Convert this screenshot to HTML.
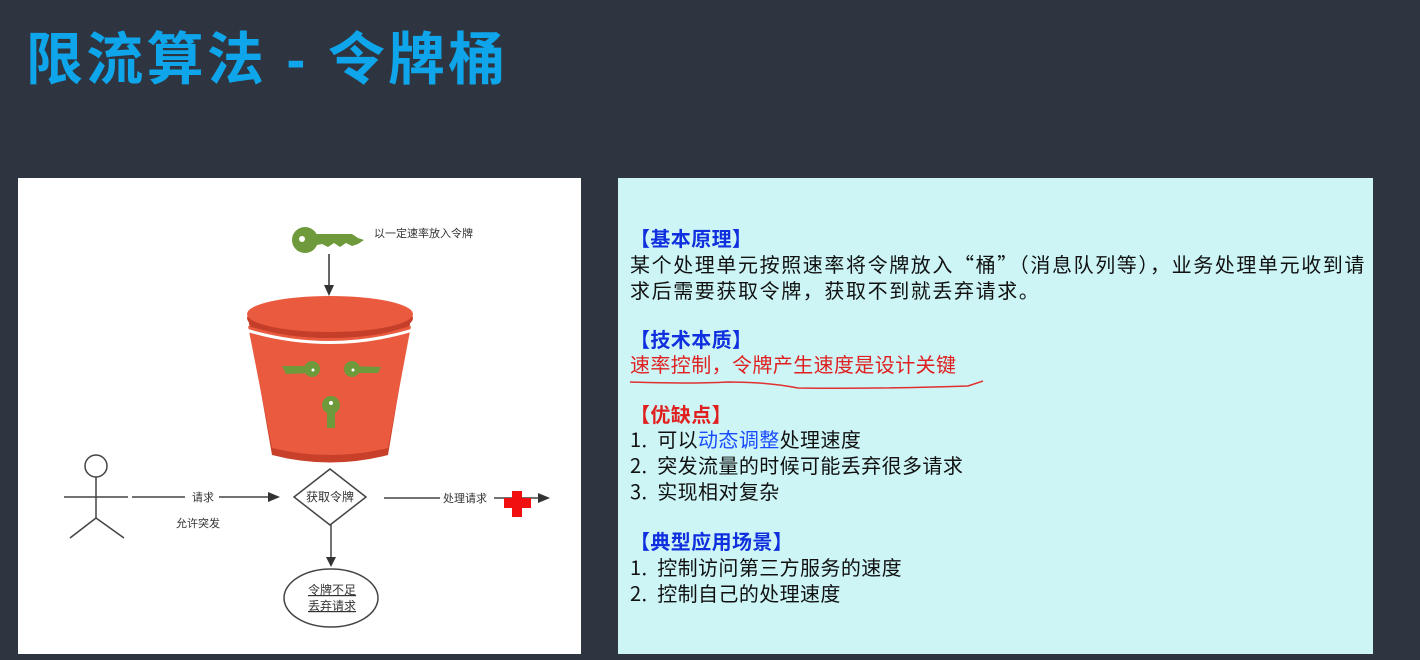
<!DOCTYPE html>
<html><head><meta charset="utf-8"><style>
body{margin:0;width:1420px;height:660px;background:#2e3541;overflow:hidden;position:relative;font-family:"Liberation Sans","Noto Sans CJK SC",sans-serif}
.title{position:absolute;left:26px;top:14px;font-size:57px;font-weight:bold;color:#0ea5ea;letter-spacing:3.3px;white-space:nowrap}
.left{position:absolute;left:18px;top:178px;width:563px;height:476px;background:#fff}
.right{position:absolute;left:618px;top:178px;width:755px;height:476px;background:#cdf5f6}
.t{position:absolute;left:12px;font-size:20px;color:#111;white-space:nowrap;line-height:26px;font-family:"Noto Sans CJK SC",sans-serif;letter-spacing:1.6px}
.h{color:#1030e0;font-weight:bold;letter-spacing:0.4px}
.red{color:#e02020}
.blue{color:#1a4cff}
</style></head><body>
<div class="title">限流算法 - 令牌桶</div>
<div class="left">
<svg width="563" height="476" viewBox="18 178 563 476" font-family="Liberation Sans,Noto Sans CJK SC,sans-serif" font-size="11" fill="#333">
<g fill="#6f9a3c">
<circle cx="305" cy="240" r="13"/>
<path d="M312 234 L352 234 L358 238 L364 240 L358 244 L352 246 L346 243 L340 247 L334 243 L328 247 L322 244 L312 246 Z"/>
</g>
<circle cx="302" cy="239" r="3" fill="#fff"/>
<text x="374" y="237">以一定速率放入令牌</text>
<line x1="329" y1="254" x2="329" y2="287" stroke="#333" stroke-width="1.5"/>
<path d="M324 285 L334 285 L329 296 Z" fill="#333"/>
<path d="M248 318 L411 318 L388 455 Q330 470 272 455 Z" fill="#c8402a"/>
<path d="M248 326 Q330 350 411 326 L388 448 Q330 462 272 448 Z" fill="#ea5a3e"/>
<ellipse cx="330" cy="318" rx="83" ry="20" fill="#c43e2a"/>
<ellipse cx="330" cy="314" rx="83" ry="18" fill="#ea5a3e"/>
<path d="M246 330 Q330 355 413 330" stroke="#fff" stroke-width="3" fill="none"/>
<g fill="#6f9a3c">
<circle cx="312" cy="369" r="8"/><path d="M282 366 L312 366 L312 373 L286 374 Z"/>
<circle cx="352" cy="369" r="8"/><path d="M352 366 L381 367 L378 373 L352 373 Z"/>
<circle cx="331" cy="405" r="9"/><path d="M327 405 L335 405 L335 428 L327 428 Z"/>
</g>
<circle cx="313" cy="370" r="1.5" fill="#fff"/><circle cx="353" cy="370" r="1.5" fill="#fff"/><circle cx="331" cy="403" r="2" fill="#fff"/>
<g stroke="#444" stroke-width="1.5" fill="none">
<circle cx="96" cy="466" r="11"/>
<line x1="96" y1="477" x2="96" y2="518"/>
<line x1="64" y1="497" x2="128" y2="497"/>
<line x1="96" y1="518" x2="70" y2="538"/>
<line x1="96" y1="518" x2="124" y2="538"/>
<line x1="132" y1="497" x2="270" y2="497"/>
<path d="M282 469 L318 497 L282 525 L246 497 Z" transform="translate(48 0)"/>
<line x1="384" y1="498" x2="540" y2="498"/>
<line x1="331" y1="525" x2="331" y2="560"/>
<ellipse cx="331" cy="598" rx="47" ry="29"/>
</g>
<rect x="185" y="490" width="34" height="14" fill="#fff"/>
<text x="192" y="501">请求</text>
<path d="M268 492 L280 497 L268 502 Z" fill="#333"/>
<text x="176" y="527">允许突发</text>
<text x="306" y="501" font-size="12">获取令牌</text>
<rect x="440" y="491" width="54" height="14" fill="#fff"/>
<text x="443" y="502">处理请求</text>
<path d="M538 493 L550 498 L538 503 Z" fill="#333"/>
<path d="M512 491 h10 v7 h9 v10 h-9 v9 h-10 v-9 h-8 v-10 h8 Z" fill="#f01010"/>
<path d="M326 557 L336 557 L331 567 Z" fill="#333"/>
<text x="308" y="594" font-size="12" text-decoration="underline">令牌不足</text>
<text x="308" y="610" font-size="12" text-decoration="underline">丢弃请求</text>
</svg>
</div>
<div class="right">
<div class="t h" style="top:47px">【基本原理】</div>
<div class="t" style="top:73px">某个处理单元按照速率将令牌放入“桶”（消息队列等），业务处理单元收到请</div>
<div class="t" style="top:99px">求后需要获取令牌，获取不到就丢弃请求。</div>
<div class="t h" style="top:148px">【技术本质】</div>
<div class="t red" style="top:173px;letter-spacing:0.4px">速率控制，令牌产生速度是设计关键</div>
<svg style="position:absolute;left:10px;top:200px" width="360" height="16"><path d="M2 4 Q60 6 100 4 Q140 4 170 10 Q250 11 340 8 L355 3" stroke="#e03030" stroke-width="1.5" fill="none"/></svg>
<div class="t h red" style="top:223px;color:#e02020">【优缺点】</div>
<div class="t" style="top:248px;letter-spacing:0.4px">1.&nbsp; 可以<span class="blue">动态调整</span>处理速度</div>
<div class="t" style="top:274px;letter-spacing:0.4px">2.&nbsp; 突发流量的时候可能丢弃很多请求</div>
<div class="t" style="top:300px;letter-spacing:0.4px">3.&nbsp; 实现相对复杂</div>
<div class="t h" style="top:350px">【典型应用场景】</div>
<div class="t" style="top:376px;letter-spacing:0.4px">1.&nbsp; 控制访问第三方服务的速度</div>
<div class="t" style="top:402px;letter-spacing:0.4px">2.&nbsp; 控制自己的处理速度</div>
</div>
</body></html>
